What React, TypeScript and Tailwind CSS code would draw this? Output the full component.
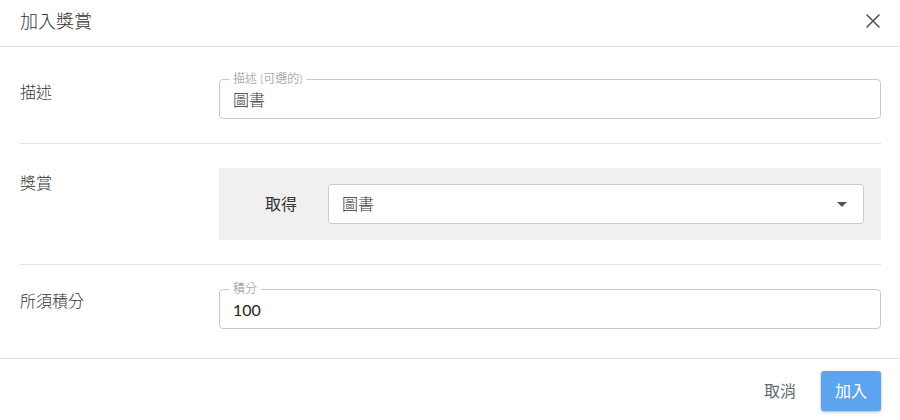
import React from "react";

const font = { fontFamily: 'Lato, "Noto Sans CJK TC", sans-serif' };

function OutlinedField({ legend, value, light = true }: { legend: string; value: string; light?: boolean }) {
  return (
    <div className="relative h-[40px] rounded-[4px] border border-[#c8c8c8] pl-[13px] flex items-center">
      <span className="absolute left-[9px] top-[-9px] bg-white px-[4px] text-[12px] leading-[15px] text-[#8a8a8a] font-light">
        {legend}
      </span>
      <span className={light ? "text-[16px] leading-[20px] text-[#333] mt-[1px] font-light" : "text-[16px] leading-[20px] text-[#222] mt-[1px] font-normal"}>
        {value}
      </span>
    </div>
  );
}

export default function App() {
  return (
    <div className="w-[900px] h-[420px] bg-white flex flex-col overflow-hidden" style={font}>
      <div className="h-[47px] border-b border-[#e2e2e2] flex items-center justify-between pl-5 pr-[20px] shrink-0">
        <span className="text-[18px] leading-[24px] text-[#333] mb-[4px] font-light">加入獎賞</span>
        <svg width="14" height="14" viewBox="0 0 14 14" className="mb-[4px]">
          <path d="M1 1 L13 13 M13 1 L1 13" stroke="#555" strokeWidth="1.6" strokeLinecap="round" />
        </svg>
      </div>
      <div className="pl-5 pr-[19px] pt-[8px] flex-1 flex flex-col">
        <div className="flex pt-6 pb-6 border-b border-[#e2e2e2]">
          <div className="w-[199px] text-[16px] leading-[24px] text-[#333] pt-[1px] shrink-0 font-light">描述</div>
          <div className="flex-1">
            <OutlinedField legend="描述 (可選的)" value="圖書" />
          </div>
        </div>
        <div className="flex pt-6 pb-6 border-b border-[#e2e2e2]">
          <div className="w-[199px] text-[16px] leading-[24px] text-[#333] pt-[3px] shrink-0 font-light">獎賞</div>
          <div className="flex-1 h-[72px] bg-[#f0f0f0] flex items-center pr-[17px]">
            <div className="w-[109px] pr-[31px] text-right text-[16px] text-[#333] shrink-0">取得</div>
            <div className="flex-1 h-[40px] bg-white border border-[#cdcdcd] rounded-[3px] flex items-center justify-between pl-[13px] pr-[16px]">
              <span className="text-[16px] text-[#333] font-light">圖書</span>
              <svg width="10" height="5" viewBox="0 0 10 5">
                <path d="M0 0 L10 0 L5 5 Z" fill="#555" />
              </svg>
            </div>
          </div>
        </div>
        <div className="flex pt-6 pb-[29px]">
          <div className="w-[199px] text-[16px] leading-[24px] text-[#333] pt-0 shrink-0 font-light">所須積分</div>
          <div className="flex-1">
            <OutlinedField legend="積分" value="100" light={false} />
          </div>
        </div>
      </div>
      <div className="border-t border-[#e2e2e2] h-[62px] flex items-start justify-end pr-[19px] pt-[12px] gap-[25px] shrink-0">
        <button className="h-[40px] text-[16px] text-[#5f6b73]">取消</button>
        <button className="w-[60px] h-[40px] rounded-[3px] bg-[#5ca4ef] text-white text-[16px] shadow-[0_1px_3px_rgba(0,0,0,0.3)]">
          加入
        </button>
      </div>
    </div>
  );
}
